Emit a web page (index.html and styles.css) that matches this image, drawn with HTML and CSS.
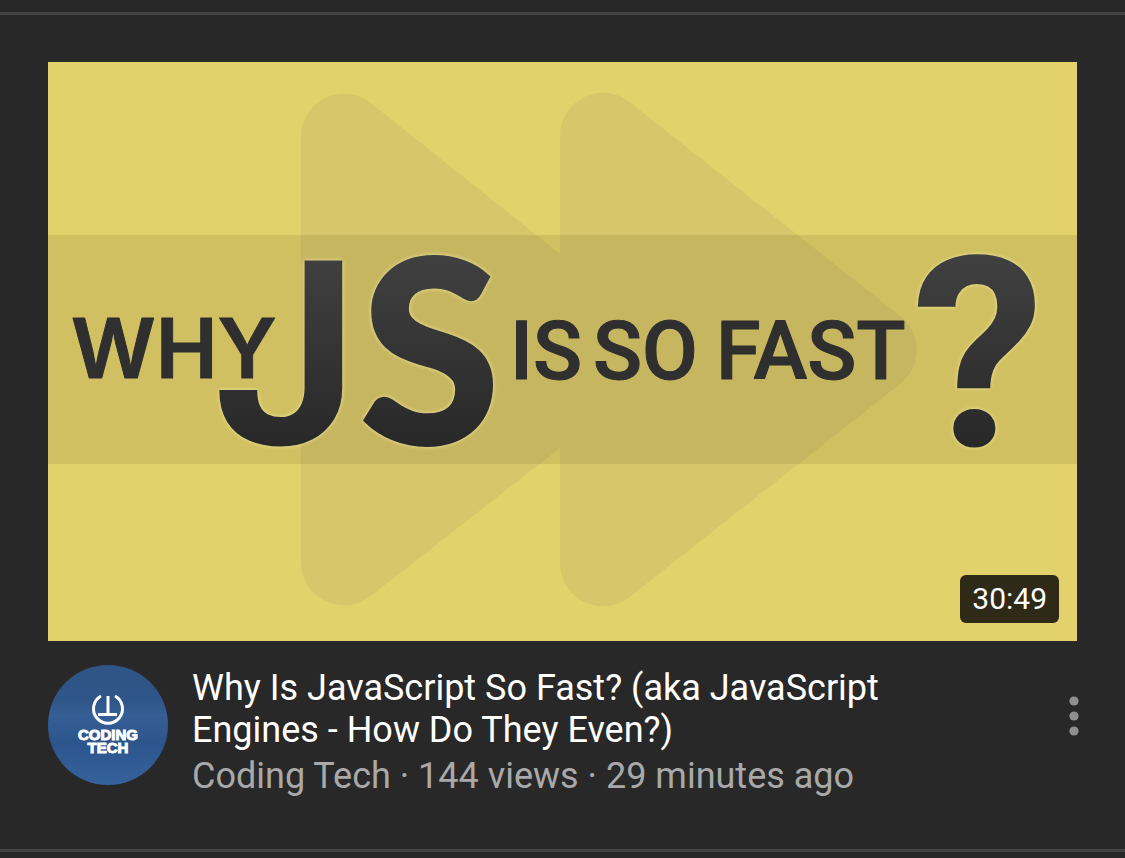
FILE: index.html
```html
<!DOCTYPE html>
<html lang="en">
<head>
<meta charset="utf-8">
<meta name="viewport" content="width=device-width, initial-scale=1">
<title>Why Is JavaScript So Fast?</title>
<link rel="stylesheet" href="styles.css">
</head>
<body>
<main class="feed">
  <article class="video">
    <a class="thumb" href="#watch" aria-label="Play Why Is JavaScript So Fast?">
      <svg class="thumb-art" viewBox="0 0 1029 579">
        <defs>
          <linearGradient id="ink" gradientUnits="userSpaceOnUse" x1="0" y1="194" x2="0" y2="385">
            <stop offset="0" stop-color="#404040"/>
            <stop offset="1" stop-color="#282828"/>
          </linearGradient>
        </defs>
        <rect width="1029" height="579" fill="#e3d26b"/>
        <path fill="#d8c66a" d="M253 74A43 43 0 0 1 324 42L512 192V74A43 43 0 0 1 584 42L852 254A43 43 0 0 1 852 322L584 533A43 43 0 0 1 512 501V386L324 533A43 43 0 0 1 253 501Z"/>
        <rect y="173" width="1029" height="229" fill="#7c7038" opacity=".18"/>
        <g class="art-words">
          <text class="art-why" x="23" y="316" font-size="83">WHY</text>
          <text x="462" y="317" font-size="81">IS</text>
          <text x="545" y="317" font-size="81">SO</text>
          <text x="668" y="317" font-size="81">FAST</text>
        </g>
        <g class="art-letters" fill="url(#ink)">
          <text class="art-j" x="166" y="382" font-size="258">J</text>
          <text class="art-s" x="313" y="380" font-size="252">S</text>
          <text class="art-mark" x="864" y="384" font-size="266">?</text>
        </g>
      </svg>
      <span class="duration">30:49</span>
    </a>
    <div class="details">
      <a class="avatar" href="#channel" aria-label="Coding Tech">
        <svg viewBox="0 0 120 120">
          <defs>
            <linearGradient id="sky" x1="0" y1="0" x2="0" y2="1">
              <stop offset="0" stop-color="#2f5485"/>
              <stop offset=".3" stop-color="#2f5689"/>
              <stop offset=".42" stop-color="#365f95"/>
              <stop offset=".65" stop-color="#2c558c"/>
              <stop offset="1" stop-color="#36629c"/>
            </linearGradient>
          </defs>
          <circle cx="60" cy="60" r="60" fill="url(#sky)"/>
          <path d="M53 31A14.500 14.500 0 1 0 67 31M60 31V49M50 49.500H69" fill="none" stroke="#fff" stroke-width="3"/>
          <g class="avatar-name">
            <text x="60" y="75">CODING</text>
            <text x="60" y="88">TECH</text>
          </g>
        </svg>
      </a>
      <div class="text">
        <h1 class="title">Why Is JavaScript So Fast? (aka JavaScript Engines - How Do They Even?)</h1>
        <p class="meta">Coding Tech · 144 views · 29 minutes ago</p>
      </div>
      <button class="more" type="button" aria-label="More actions">
        <svg width="10" height="40" viewBox="0 0 10 40" fill="#909090">
          <circle cx="5" cy="5" r="4.600"/><circle cx="5" cy="20" r="4.600"/><circle cx="5" cy="35" r="4.600"/>
        </svg>
      </button>
    </div>
  </article>
</main>
</body>
</html>
```
FILE: styles.css
```css
* { box-sizing: border-box; }

body {
  margin: 0;
  background: #282828;
  color: #fff;
  font-family: Roboto, "Liberation Sans", sans-serif;
}

.feed { padding-top: 12px; }

.video {
  padding: 47px 48px 52px;
  border-top: 3px solid #444;
  border-bottom: 3px solid #444;
}

.thumb {
  position: relative;
  display: block;
}

.thumb-art {
  display: block;
  width: 100%;
  height: auto;
}

.art-words {
  fill: #2f2f2f;
  stroke: #2f2f2f;
  stroke-width: 1px;
  stroke-linejoin: round;
  font-family: Roboto, sans-serif;
  font-weight: 500;
}

.art-why {
  font-family: Inter, sans-serif;
  font-weight: 600;
}

.art-letters {
  font-weight: 700;
  filter: drop-shadow(0 0 2px #f0e6a0);
}

.art-j { font-family: Roboto, sans-serif; }

.art-s {
  stroke: url(#ink);
  stroke-width: 6px;
  font-family: Lato, sans-serif;
}

.art-mark { font-family: Roboto, sans-serif; }

.duration {
  position: absolute;
  right: 18px;
  bottom: 18px;
  padding: 0 12px;
  border-radius: 6px;
  background: #2f2a18;
  color: #fff;
  font-size: 30px;
  line-height: 48px;
}

.details {
  display: flex;
  align-items: flex-start;
  gap: 24px;
  padding-top: 24px;
}

.avatar {
  flex: none;
  width: 120px;
  height: 120px;
}

.avatar svg { display: block; }

.avatar-name {
  fill: #fff;
  stroke: #fff;
  stroke-width: 1px;
  font-family: "Liberation Sans", sans-serif;
  font-size: 15px;
  font-weight: 700;
  text-anchor: middle;
}

.text {
  flex: 1;
  padding-top: 2px;
}

.title {
  max-width: 720px;
  margin: 0;
  font-size: 36px;
  font-weight: 400;
  line-height: 42px;
}

.meta {
  margin: 4px 0 0;
  color: #a9a9a9;
  font-size: 36px;
  line-height: 42px;
}

.more {
  display: flex;
  margin: 31px -2px 0 0;
  padding: 0;
  border: 0;
  background: none;
  cursor: pointer;
}
```
